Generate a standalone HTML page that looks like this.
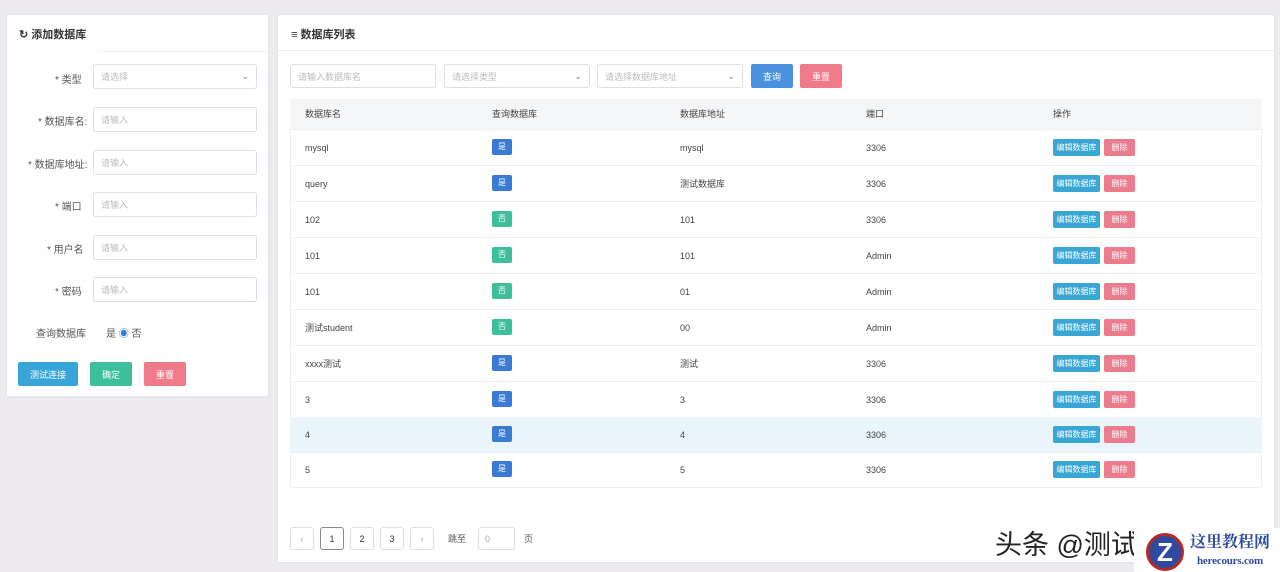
<html><head><style>
*{box-sizing:border-box;margin:0;padding:0}
body{width:1280px;height:572px;background:#eceaef;font-family:"Liberation Sans","Noto Sans CJK SC",sans-serif;font-size:10px;color:#333;position:relative;overflow:hidden}
.p{position:absolute;background:#fff;border:1px solid #e4e4e8;border-radius:3px}
.t{position:absolute;font-weight:bold;font-size:11px;color:#333}
.in{position:absolute;border:1px solid #dcdfe6;border-radius:3px;background:#fff;color:#bbb;font-size:9px;padding:0 7px;display:flex;align-items:center}
.lb{position:absolute;font-size:10px;color:#555}
.btn{position:absolute;color:#fff;font-size:9px;display:flex;align-items:center;justify-content:center;border-radius:2px}
.row{position:absolute;left:290px;width:972px;height:36px;border-bottom:1px solid #ebeef5}
.c{position:absolute;top:0;height:36px;line-height:36px;font-size:9px;color:#444}
.bd{position:absolute;width:20px;height:16px;border-radius:2px;color:#fff;font-size:8px;text-align:center;line-height:16px}
.e{position:absolute;left:763px;top:9px;width:47px;height:17px;background:#39a6d6;color:#fff;font-size:8px;text-align:center;line-height:17px;border-radius:2px}
.d{position:absolute;left:814px;top:9px;width:31px;height:17px;background:#ec7b8e;color:#fff;font-size:8px;text-align:center;line-height:17px;border-radius:2px}
.pg{position:absolute;top:527px;height:23px;border:1px solid #dcdfe6;border-radius:3px;font-size:9px;display:flex;align-items:center;justify-content:center;background:#fff}
</style></head><body>
<div class="p" style="left:6px;top:14px;width:263px;height:383px"></div>
<div class="t" style="left:19px;top:26px">↻ 添加数据库</div>
<div style="position:absolute;left:98px;top:51px;width:171px;border-top:1px solid #eee"></div>
<div class="lb" style="top:71px;left:55px">* 类型</div>
<div class="in" style="left:93px;top:64px;width:164px;height:25px">请选择<span style="margin-left:auto;color:#888">⌄</span></div>
<div class="lb" style="top:113px;left:38px">* 数据库名:</div>
<div class="in" style="left:93px;top:107px;width:164px;height:25px">请输入</div>
<div class="lb" style="top:156px;left:28px">* 数据库地址:</div>
<div class="in" style="left:93px;top:150px;width:164px;height:25px">请输入</div>
<div class="lb" style="top:198px;left:55px">* 端口</div>
<div class="in" style="left:93px;top:192px;width:164px;height:25px">请输入</div>
<div class="lb" style="top:241px;left:47px">* 用户名</div>
<div class="in" style="left:93px;top:235px;width:164px;height:25px">请输入</div>
<div class="lb" style="top:283px;left:55px">* 密码</div>
<div class="in" style="left:93px;top:277px;width:164px;height:25px">请输入</div>
<div class="lb" style="top:325px;left:36px">查询数据库</div>
<div style="position:absolute;left:106px;top:325px;font-size:10px;color:#555">是 <span style="color:#3a7bd5">◉</span> 否</div>
<div class="btn" style="left:18px;top:362px;width:60px;height:24px;background:#37a5d8">测试连接</div>
<div class="btn" style="left:90px;top:362px;width:42px;height:24px;background:#3dbf9c">确定</div>
<div class="btn" style="left:144px;top:362px;width:42px;height:24px;background:#ef7a8a">重置</div>

<div class="p" style="left:277px;top:14px;width:998px;height:549px"></div>
<div class="t" style="left:291px;top:26px">≡ 数据库列表</div>
<div style="position:absolute;left:278px;top:50px;width:996px;border-top:1px solid #eee"></div>
<div class="in" style="left:290px;top:64px;width:146px;height:24px">请输入数据库名</div>
<div class="in" style="left:444px;top:64px;width:146px;height:24px">请选择类型<span style="margin-left:auto;color:#888">⌄</span></div>
<div class="in" style="left:597px;top:64px;width:146px;height:24px">请选择数据库地址<span style="margin-left:auto;color:#888">⌄</span></div>
<div class="btn" style="left:751px;top:64px;width:42px;height:24px;background:#4a92e0">查询</div>
<div class="btn" style="left:800px;top:64px;width:42px;height:24px;background:#ef7a8a">重置</div>
<div style="position:absolute;left:290px;top:99px;width:972px;height:389px;border:1px solid #ebeef5"></div>
<div class="row" style="top:99px;height:31px;background:#f5f6f8"><div class="c" style="left:15px;height:31px;line-height:31px">数据库名</div><div class="c" style="left:202px;height:31px;line-height:31px">查询数据库</div><div class="c" style="left:390px;height:31px;line-height:31px">数据库地址</div><div class="c" style="left:576px;height:31px;line-height:31px">端口</div><div class="c" style="left:763px;height:31px;line-height:31px">操作</div></div>
<div class="row" style="top:130px"><div class="c" style="left:15px">mysql</div><div class="bd" style="left:202px;top:9px;background:#3a7bd5">是</div><div class="c" style="left:390px">mysql</div><div class="c" style="left:576px">3306</div><div class="e">编辑数据库</div><div class="d">删除</div></div>
<div class="row" style="top:166px"><div class="c" style="left:15px">query</div><div class="bd" style="left:202px;top:9px;background:#3a7bd5">是</div><div class="c" style="left:390px">测试数据库</div><div class="c" style="left:576px">3306</div><div class="e">编辑数据库</div><div class="d">删除</div></div>
<div class="row" style="top:202px"><div class="c" style="left:15px">102</div><div class="bd" style="left:202px;top:9px;background:#3dbf9c">否</div><div class="c" style="left:390px">101</div><div class="c" style="left:576px">3306</div><div class="e">编辑数据库</div><div class="d">删除</div></div>
<div class="row" style="top:238px"><div class="c" style="left:15px">101</div><div class="bd" style="left:202px;top:9px;background:#3dbf9c">否</div><div class="c" style="left:390px">101</div><div class="c" style="left:576px">Admin</div><div class="e">编辑数据库</div><div class="d">删除</div></div>
<div class="row" style="top:274px"><div class="c" style="left:15px">101</div><div class="bd" style="left:202px;top:9px;background:#3dbf9c">否</div><div class="c" style="left:390px">01</div><div class="c" style="left:576px">Admin</div><div class="e">编辑数据库</div><div class="d">删除</div></div>
<div class="row" style="top:310px"><div class="c" style="left:15px">测试student</div><div class="bd" style="left:202px;top:9px;background:#3dbf9c">否</div><div class="c" style="left:390px">00</div><div class="c" style="left:576px">Admin</div><div class="e">编辑数据库</div><div class="d">删除</div></div>
<div class="row" style="top:346px"><div class="c" style="left:15px">xxxx测试</div><div class="bd" style="left:202px;top:9px;background:#3a7bd5">是</div><div class="c" style="left:390px">测试</div><div class="c" style="left:576px">3306</div><div class="e">编辑数据库</div><div class="d">删除</div></div>
<div class="row" style="top:382px"><div class="c" style="left:15px">3</div><div class="bd" style="left:202px;top:9px;background:#3a7bd5">是</div><div class="c" style="left:390px">3</div><div class="c" style="left:576px">3306</div><div class="e">编辑数据库</div><div class="d">删除</div></div>
<div class="row" style="top:417px;background:#e9f4fb"><div class="c" style="left:15px">4</div><div class="bd" style="left:202px;top:9px;background:#3a7bd5">是</div><div class="c" style="left:390px">4</div><div class="c" style="left:576px">3306</div><div class="e">编辑数据库</div><div class="d">删除</div></div>
<div class="row" style="top:452px;border-bottom:none"><div class="c" style="left:15px">5</div><div class="bd" style="left:202px;top:9px;background:#3a7bd5">是</div><div class="c" style="left:390px">5</div><div class="c" style="left:576px">3306</div><div class="e">编辑数据库</div><div class="d">删除</div></div>
<div class="pg" style="left:290px;width:24px;color:#aaa">‹</div>
<div class="pg" style="left:320px;width:24px;border-color:#888">1</div>
<div class="pg" style="left:350px;width:24px">2</div>
<div class="pg" style="left:380px;width:24px">3</div>
<div class="pg" style="left:410px;width:24px;color:#aaa">›</div>
<div style="position:absolute;left:448px;top:532px;font-size:9px;color:#555">跳至</div>
<div class="pg" style="left:478px;width:37px;color:#aaa;justify-content:flex-start;padding-left:6px">0</div>
<div style="position:absolute;left:524px;top:532px;font-size:9px;color:#555">页</div>
<div style="position:absolute;left:995px;top:523px;font-size:27px;color:#222;white-space:nowrap">头条 @测试</div>
<div style="position:absolute;left:1134px;top:528px;width:146px;height:44px;background:#fff"></div>
<div style="position:absolute;left:1146px;top:533px;width:38px;height:38px;border-radius:50%;background:#2f4a9e;color:#fff;font-weight:bold;font-size:26px;text-align:center;line-height:32px;border:3px solid #b32a2a">Z</div>
<div style="position:absolute;left:1190px;top:532px;font-size:16px;line-height:18px;font-weight:bold;color:#2e4aa0;white-space:nowrap;font-family:'Noto Serif CJK SC',serif">这里教程网</div>
<div style="position:absolute;left:1197px;top:555px;font-size:11px;line-height:12px;font-weight:bold;color:#2e4aa0;white-space:nowrap;letter-spacing:-0.2px;font-family:'Liberation Serif',serif">herecours.com</div>
</body></html>
